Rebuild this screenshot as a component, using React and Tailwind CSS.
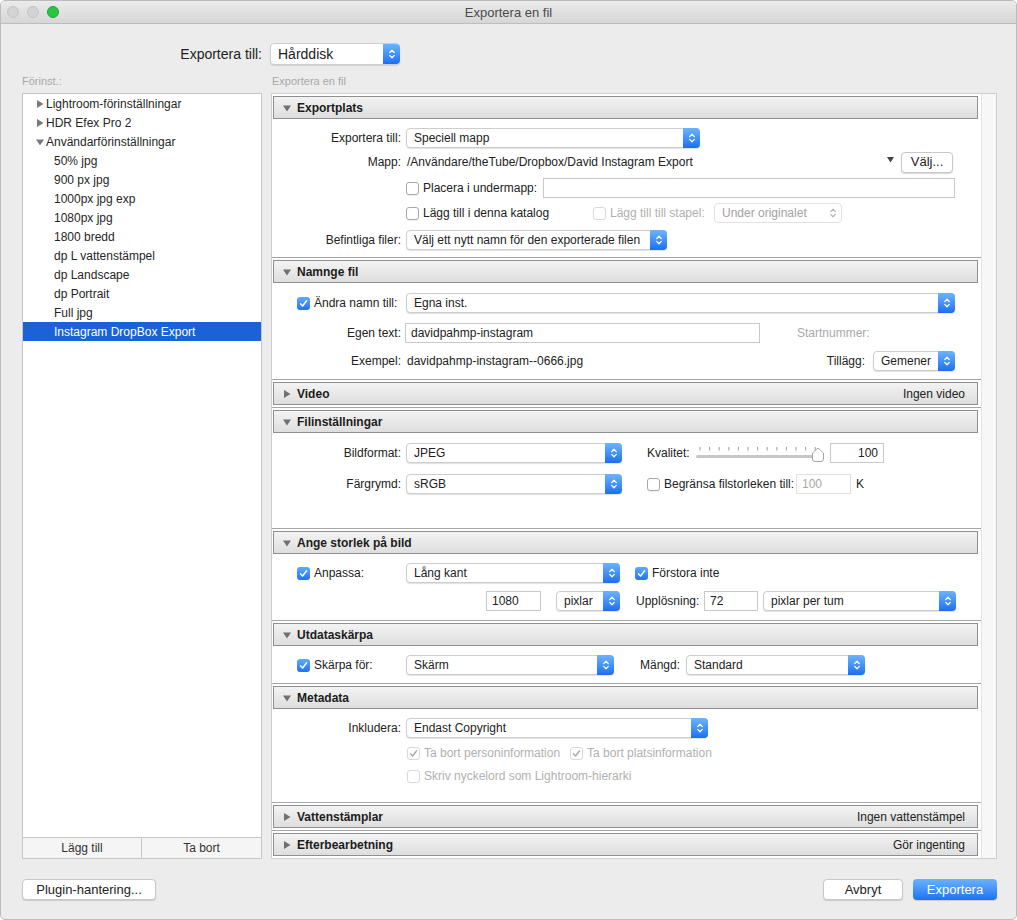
import React from "react";

const presets = [
  { label: "Lightroom-förinställningar", group: "closed" },
  { label: "HDR Efex Pro 2", group: "closed" },
  { label: "Användarförinställningar", group: "open" },
  { label: "50% jpg" },
  { label: "900 px jpg" },
  { label: "1000px jpg exp" },
  { label: "1080px jpg" },
  { label: "1800 bredd" },
  { label: "dp L vattenstämpel" },
  { label: "dp Landscape" },
  { label: "dp Portrait" },
  { label: "Full jpg" },
  { label: "Instagram DropBox Export", selected: true },
];

function Chevrons({ color = "white" }) {
  return (
    <svg width="8" height="12" viewBox="0 0 8 12" fill="none" stroke={color} strokeWidth="1.3" strokeLinecap="round" strokeLinejoin="round">
      <path d="M1.7 4.6 4 2.3 6.3 4.6" />
      <path d="M1.7 7.4 4 9.7 6.3 7.4" />
    </svg>
  );
}

function Tri({ open, color = "#707070" }) {
  if (open) {
    return (
      <svg width="8" height="8" viewBox="0 0 8 8" className="shrink-0">
        <path d="M0 1.5h8L4 7.5z" fill={color} />
      </svg>
    );
  }
  return (
    <svg width="8" height="8" viewBox="0 0 8 8" className="shrink-0">
      <path d="M1 0v8l6.5-4z" fill={color} />
    </svg>
  );
}

function Popup({ className, children, disabled }) {
  return (
    <div
      className={
        "flex h-[20px] shrink-0 items-center rounded-[4px] border bg-white " +
        (disabled
          ? "border-[#e2e2e2] text-[#a3a3a3] "
          : "border-[#cdcdcd] shadow-[0_1px_1px_rgba(0,0,0,0.12)] ") +
        className
      }
    >
      <span className="flex-1 truncate pl-[7px]">{children}</span>
      {disabled ? (
        <span className="flex w-[17px] justify-center">
          <Chevrons color="#b5b5b5" />
        </span>
      ) : (
        <span className="-my-px -mr-px flex h-[20px] w-[17px] items-center justify-center rounded-r-[4px] bg-gradient-to-b from-[#6db4fd] to-[#1a6ff0]">
          <Chevrons />
        </span>
      )}
    </div>
  );
}

function Check({ checked, disabled }) {
  const tick = (color) => (
    <svg width="9" height="9" viewBox="0 0 9 9">
      <path d="M1.6 4.9 3.6 7 7.6 1.8" fill="none" stroke={color} strokeWidth="1.5" strokeLinecap="round" strokeLinejoin="round" />
    </svg>
  );
  if (checked && !disabled) {
    return (
      <span className="flex h-[13px] w-[13px] shrink-0 items-center justify-center rounded-[3px] bg-gradient-to-b from-[#62aafc] to-[#1f72ef]">
        {tick("white")}
      </span>
    );
  }
  return (
    <span
      className={
        "flex h-[13px] w-[13px] shrink-0 items-center justify-center rounded-[3px] border bg-white " +
        (disabled ? "border-[#d9d9d9]" : "border-[#a8a8a8] shadow-[0_1px_1px_rgba(0,0,0,0.06)]")
      }
    >
      {checked && tick("#ababab")}
    </span>
  );
}

function Field({ className, children, disabled, right }) {
  return (
    <div
      className={
        "flex h-[20px] shrink-0 items-center border bg-white px-[5px] " +
        (disabled ? "border-[#e0e0e0] text-[#a8a8a8] " : "border-[#c9c9c9] ") +
        (right ? "justify-end " : "") +
        className
      }
    >
      {children}
    </div>
  );
}

function Label({ children }) {
  return <div className="w-[130px] shrink-0 pr-px text-right">{children}</div>;
}

function Header({ title, open, right }) {
  return (
    <div className="ml-px mr-[3px] flex h-[23px] items-center border border-[#8f8f8f] bg-gradient-to-b from-[#f3f3f3] to-[#dedede] pl-[9px] pr-[12px]">
      <Tri open={open} />
      <span className="ml-[6px] font-bold text-[#1c1c1c]">{title}</span>
      {right && <span className="ml-auto text-[#222]">{right}</span>}
    </div>
  );
}

function Section({ title, open, right, children, className = "" }) {
  return (
    <div className={"border-b border-[#a6a6a6] pt-[2px] " + (open ? "" : "pb-[2px]")}>
      <Header title={title} open={open} right={right} />
      {open && <div className={"flex flex-col " + className}>{children}</div>}
    </div>
  );
}

function Slider() {
  const ticks = [];
  for (let i = 0; i < 13; i++) ticks.push(4 + i * 9.6);
  return (
    <svg width="130" height="20" viewBox="0 0 130 20" className="shrink-0">
      {ticks.map((x) => (
        <line key={x} x1={x} y1="4" x2={x} y2="7.5" stroke="#9c9c9c" strokeWidth="1" />
      ))}
      <rect x="0" y="12" width="124" height="3" rx="1.5" fill="#c6c6c6" />
      <path d="M116.5 10 L122 5 L127.5 10 V16 Q127.5 18.5 125 18.5 H119 Q116.5 18.5 116.5 16 Z" fill="white" stroke="#a5a5a5" />
    </svg>
  );
}

function Button({ className, children, primary }) {
  return (
    <div
      className={
        "flex h-[21px] items-center justify-center rounded-[4px] text-[13px] shadow-[0_1px_1px_rgba(0,0,0,0.15)] " +
        (primary
          ? "bg-gradient-to-b from-[#6ab2fd] to-[#1b72f0] text-white "
          : "border border-[#c8c8c8] bg-white text-[#222] ") +
        className
      }
    >
      {children}
    </div>
  );
}

export default function App() {
  return (
    <div className="h-[920px] w-[1017px] overflow-hidden bg-white font-['Liberation_Sans',Arial,sans-serif] text-[12px] text-[#222]">
      <div className="flex h-[920px] flex-col overflow-hidden rounded-[5px] border border-[#bcbcbc] bg-[#ececec]">
        {/* title bar */}
        <div className="grid h-[23px] shrink-0 grid-cols-[1fr_auto_1fr] items-center border-b border-[#bdbdbd] bg-gradient-to-b from-[#ebebeb] to-[#d6d6d6]">
          <div className="flex items-center gap-[8px] pl-[6px]">
            <span className="h-[12px] w-[12px] rounded-full border border-[#c4c4c4] bg-[#d3d3d3]" />
            <span className="h-[12px] w-[12px] rounded-full border border-[#c4c4c4] bg-[#d3d3d3]" />
            <span className="h-[12px] w-[12px] rounded-full border border-[#1fa533] bg-[#2ac642]" />
          </div>
          <div className="pt-[2px] text-[13px] text-[#4a4a4a]">Exportera en fil</div>
          <div />
        </div>

        <div className="flex flex-1 flex-col pl-[21px] pr-[19px]">
          {/* export target */}
          <div className="mt-[19px] flex h-[22px] items-center">
            <div className="w-[240px] text-right text-[14px] text-[#1e1e1e]">Exportera till:</div>
            <Popup className="ml-[8px] h-[22px] w-[130px] text-[14px]">Hårddisk</Popup>
          </div>

          <div className="mt-[9px] flex h-[14px] items-center text-[11px] text-[#a8a8a8]">
            <div className="w-[250px]">Förinst.:</div>
            <div>Exportera en fil</div>
          </div>

          <div className="mt-[5px] flex h-[766px]">
            {/* presets */}
            <div className="flex w-[240px] shrink-0 flex-col border border-[#c6c6c6] bg-white">
              <div className="flex-1">
                {presets.map((p) => (
                  <div
                    key={p.label}
                    className={
                      "flex h-[19px] items-center " +
                      (p.group ? "pl-[13px] " : "pl-[31px] ") +
                      (p.selected ? "bg-[#1b62d6] text-white" : "text-[#262626]")
                    }
                  >
                    {p.group && <Tri open={p.group === "open"} color="#7a7a7a" />}
                    <span className={p.group ? "ml-[2px]" : ""}>{p.label}</span>
                  </div>
                ))}
              </div>
              <div className="grid h-[21px] grid-cols-[119px_1fr] border-t border-[#c6c6c6] bg-[#f5f5f5] text-[#333]">
                <div className="flex items-center justify-center border-r border-[#c6c6c6]">Lägg till</div>
                <div className="flex items-center justify-center">Ta bort</div>
              </div>
            </div>

            {/* settings */}
            <div className="ml-[9px] flex w-[726px] shrink-0 border border-[#cdcdcd] bg-white">
              <div className="flex-1 overflow-hidden">
                <Section title="Exportplats" open className="pb-[7px] pt-[9px]">
                  <div className="flex h-[20px] items-center">
                    <Label>Exportera till:</Label>
                    <Popup className="ml-[4px] w-[294px]">Speciell mapp</Popup>
                  </div>
                  <div className="mt-[4px] flex h-[20px] items-center">
                    <Label>Mapp:</Label>
                    <span className="ml-[5px] flex-1">/Användare/theTube/Dropbox/David Instagram Export</span>
                    <svg width="7" height="6" viewBox="0 0 7 6" className="mb-[4px]">
                      <path d="M0 0h7L3.5 5.5z" fill="#444" />
                    </svg>
                    <Button className="ml-[7px] mr-[28px] h-[20px] w-[52px] text-[12px]">Välj...</Button>
                  </div>
                  <div className="mt-[6px] flex h-[20px] items-center">
                    <div className="w-[134px] shrink-0" />
                    <div className="flex w-[137px] shrink-0 items-center">
                      <Check />
                      <span className="ml-[4px]">Placera i undermapp:</span>
                    </div>
                    <Field className="w-[412px]" />
                  </div>
                  <div className="mt-[5px] flex h-[20px] items-center">
                    <div className="w-[134px] shrink-0" />
                    <div className="flex w-[187px] shrink-0 items-center">
                      <Check />
                      <span className="ml-[4px]">Lägg till i denna katalog</span>
                    </div>
                    <div className="flex w-[121px] shrink-0 items-center text-[#b0b0b0]">
                      <Check disabled />
                      <span className="ml-[4px]">Lägg till till stapel:</span>
                    </div>
                    <Popup disabled className="w-[128px]">Under originalet</Popup>
                  </div>
                  <div className="mt-[7px] flex h-[20px] items-center">
                    <Label>Befintliga filer:</Label>
                    <Popup className="ml-[4px] w-[261px]">Välj ett nytt namn för den exporterade filen</Popup>
                  </div>
                </Section>

                <Section title="Namnge fil" open className="pb-[8px] pt-[10px]">
                  <div className="flex h-[20px] items-center">
                    <div className="flex w-[134px] shrink-0 items-center pl-[25px]">
                      <Check checked />
                      <span className="ml-[4px]">Ändra namn till:</span>
                    </div>
                    <Popup className="w-[549px]">Egna inst.</Popup>
                  </div>
                  <div className="mt-[10px] flex h-[20px] items-center">
                    <Label>Egen text:</Label>
                    <Field className="ml-[3px] w-[355px]">davidpahmp-instagram</Field>
                    <span className="ml-[37px] text-[#a8a8a8]">Startnummer:</span>
                  </div>
                  <div className="mt-[8px] flex h-[20px] items-center">
                    <Label>Exempel:</Label>
                    <span className="ml-[5px] flex-1">davidpahmp-instagram--0666.jpg</span>
                    <span>Tillägg:</span>
                    <Popup className="ml-[8px] mr-[26px] w-[82px]">Gemener</Popup>
                  </div>
                </Section>

                <Section title="Video" right="Ingen video" />

                <Section title="Filinställningar" open className="pb-[34px] pt-[10px]">
                  <div className="flex h-[20px] items-center">
                    <Label>Bildformat:</Label>
                    <Popup className="ml-[4px] w-[216px]">JPEG</Popup>
                    <span className="ml-[25px] w-[49px] shrink-0">Kvalitet:</span>
                    <Slider />
                    <Field right className="ml-[4px] w-[54px]">100</Field>
                  </div>
                  <div className="mt-[11px] flex h-[20px] items-center">
                    <Label>Färgrymd:</Label>
                    <Popup className="ml-[4px] w-[216px]">sRGB</Popup>
                    <div className="ml-[25px] flex w-[149px] shrink-0 items-center">
                      <Check />
                      <span className="ml-[4px]">Begränsa filstorleken till:</span>
                    </div>
                    <Field disabled className="w-[55px]">100</Field>
                    <span className="ml-[5px]">K</span>
                  </div>
                </Section>

                <Section title="Ange storlek på bild" open className="pb-[9px] pt-[9px]">
                  <div className="flex h-[20px] items-center">
                    <div className="flex w-[134px] shrink-0 items-center pl-[25px]">
                      <Check checked />
                      <span className="ml-[4px]">Anpassa:</span>
                    </div>
                    <Popup className="w-[214px]">Lång kant</Popup>
                    <div className="ml-[15px] flex items-center">
                      <Check checked />
                      <span className="ml-[4px]">Förstora inte</span>
                    </div>
                  </div>
                  <div className="mt-[8px] flex h-[20px] items-center">
                    <div className="w-[214px] shrink-0" />
                    <Field className="w-[55px]">1080</Field>
                    <Popup className="ml-[15px] w-[64px]">pixlar</Popup>
                    <span className="ml-[16px] w-[68px] shrink-0">Upplösning:</span>
                    <Field className="w-[54px]">72</Field>
                    <Popup className="ml-[5px] w-[193px]">pixlar per tum</Popup>
                  </div>
                </Section>

                <Section title="Utdataskärpa" open className="pb-[8px] pt-[9px]">
                  <div className="flex h-[20px] items-center">
                    <div className="flex w-[134px] shrink-0 items-center pl-[25px]">
                      <Check checked />
                      <span className="ml-[4px]">Skärpa för:</span>
                    </div>
                    <Popup className="w-[208px]">Skärm</Popup>
                    <span className="ml-[26px] w-[46px] shrink-0">Mängd:</span>
                    <Popup className="w-[179px]">Standard</Popup>
                  </div>
                </Section>

                <Section title="Metadata" open className="pb-[16px] pt-[9px]">
                  <div className="flex h-[20px] items-center">
                    <Label>Inkludera:</Label>
                    <Popup className="ml-[4px] w-[302px]">Endast Copyright</Popup>
                  </div>
                  <div className="mt-[5px] flex h-[20px] items-center text-[#b0b0b0]">
                    <div className="w-[135px] shrink-0" />
                    <Check checked disabled />
                    <span className="ml-[4px]">Ta bort personinformation</span>
                    <span className="ml-[10px]">
                      <Check checked disabled />
                    </span>
                    <span className="ml-[4px]">Ta bort platsinformation</span>
                  </div>
                  <div className="mt-[3px] flex h-[20px] items-center text-[#b0b0b0]">
                    <div className="w-[135px] shrink-0" />
                    <Check disabled />
                    <span className="ml-[4px]">Skriv nyckelord som Lightroom-hierarki</span>
                  </div>
                </Section>

                <Section title="Vattenstämplar" right="Ingen vattenstämpel" />
                <div className="pt-[2px]">
                  <Header title="Efterbearbetning" right="Gör ingenting" />
                </div>
              </div>
              <div className="w-[15px] shrink-0 border-l border-[#e4e4e4] bg-[#f7f7f7]" />
            </div>
          </div>

          {/* footer */}
          <div className="mt-[20px] flex items-center">
            <Button className="w-[134px]">Plugin-hantering...</Button>
            <Button className="ml-auto w-[80px]">Avbryt</Button>
            <Button primary className="ml-[10px] w-[84px]">Exportera</Button>
          </div>
        </div>
      </div>
    </div>
  );
}
